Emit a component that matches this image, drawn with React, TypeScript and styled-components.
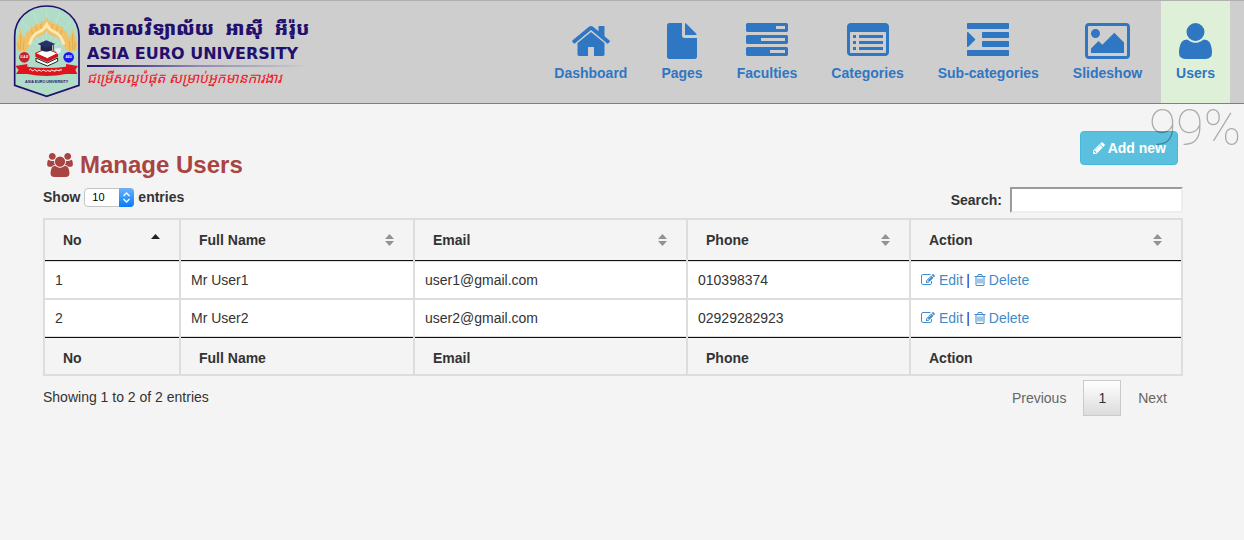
import React from "react";
import styled, { createGlobalStyle } from "styled-components";

const GlobalStyle = createGlobalStyle`
  *, *::before, *::after { box-sizing: border-box; }
  body {
    margin: 0;
    background: #f4f4f4;
    color: #333;
    font: 14px/20px "Liberation Sans", Arial, sans-serif;
  }
  a { color: #428bca; text-decoration: none; }
  button, input, select { font: inherit; color: inherit; }
`;

/* ---------- icons ---------- */

type IconShape = { width: number; d: string };

const row = (y: number, x = 0) =>
  `M1792 ${y + 32}v192q0 13-9.5 22.5t-22.5 9.5h-${1728 - x}q-13 0-22.5-9.5t-9.5-22.5v-192q0-13 9.5-22.5t22.5-9.5h${1728 - x}q13 0 22.5 9.5t9.5 22.5z`;
const dot = (y: number) => `M256 ${y}h128v128h-128zM512 ${y}h1024v128h-1024z`;
const bar = (y: number) =>
  `M1792 ${y + 64}v256q0 26-19 45t-45 19h-1664q-26 0-45-19t-19-45v-256q0-26 19-45t45-19h1664q26 0 45 19t19 45z`;
const slot = (x: number) =>
  `M${x} 736v576q0 14-9 23t-23 9h-64q-14 0-23-9t-9-23v-576q0-14 9-23t23-9h64q14 0 23 9t9 23z`;

const icons: Record<string, IconShape> = {
  home: {
    width: 1792,
    d: "M1472 992v480q0 26-19 45t-45 19h-384v-384h-256v384h-384q-26 0-45-19t-19-45v-480q0-1 .5-3t.5-3l575-474 575 474q1 2 1 6zm223-69l-62 74q-8 9-21 11h-3q-13 0-21-7l-692-577-692 577q-12 8-24 7-13-2-21-11l-62-74q-8-10-7-23.5t11-21.5l719-599q32-26 76-26t76 26l244 204v-195q0-14 9-23t23-9h192q14 0 23 9t9 23v408l219 182q10 8 11 21.5t-7 23.5z",
  },
  file: {
    width: 1280,
    d: "M96 128H640V672q0 40 28 68t68 28H1280V1568q0 40-28 68t-68 28H96q-40 0-68-28t-28-68V224q0-40 28-68t68-28zM768 128q40 14 66 40l388 388q34 34 44 84H768z",
  },
  tasks: {
    width: 1792,
    d: `${bar(128)}M1280 256v128h384v-128z${bar(640)}M640 768v128h1024v-128z${bar(1152)}M1024 1280v128h640v-128z`,
  },
  list: {
    width: 1792,
    d: `M160 128h1472q66 0 113 47t47 113v1088q0 66-47 113t-113 47H160q-66 0-113-47t-47-113V288q0-66 47-113t113-47zM160 512q-32 0-32 32v832q0 32 32 32h1472q32 0 32-32V544q0-32-32-32z${dot(640)}${dot(896)}${dot(1152)}`,
  },
  indent: {
    width: 1792,
    d: `M352 832q0 14-9 23l-288 288q-9 9-23 9-13 0-22.5-9.5t-9.5-22.5v-576q0-13 9.5-22.5t22.5-9.5q14 0 23 9l288 288q9 9 9 23z${row(128)}${row(512, 640)}${row(896, 640)}${row(1280)}`,
  },
  picture: {
    width: 1920,
    d: "M640 576q0 80-56 136t-136 56-136-56-56-136 56-136 136-56 136 56 56 136zm1024 384v448h-1408v-192l320-320 160 160 512-512zm96-704h-1600q-13 0-22.5 9.5t-9.5 22.5v1216q0 13 9.5 22.5t22.5 9.5h1600q13 0 22.5-9.5t9.5-22.5v-1216q0-13-9.5-22.5t-22.5-9.5zm160 32v1216q0 66-47 113t-113 47h-1600q-66 0-113-47t-47-113v-1216q0-66 47-113t113-47h1600q66 0 113 47t47 113z",
  },
  user: {
    width: 1408,
    d: "M1408 1405q0 120-73 189.5t-194 69.5h-874q-121 0-194-69.5t-73-189.5q0-53 3.5-103.5t14-109 26.5-108.5 43-97.5 62-81 85.5-53.5 111.5-20q9 0 42 21.5t74.5 48 108 48 133.5 21.5 133.5-21.5 108-48 74.5-48 42-21.5q61 0 111.5 20t85.5 53.5 62 81 43 97.5 26.5 108.5 14 109 3.5 103.5zM1088 512q0 159-112.5 271.5t-271.5 112.5-271.5-112.5-112.5-271.5 112.5-271.5 271.5-112.5 271.5 112.5 112.5 271.5z",
  },
  users: {
    width: 1920,
    d: "M593 896q-162 5-265 128h-134q-82 0-138-40.5t-56-118.5q0-353 124-353 6 0 43.5 21t97.5 42.5 119 21.5q67 0 133-23-5 37-5 66 0 139 81 256zm1071 637q0 120-73 189.5t-194 69.5h-874q-121 0-194-69.5t-73-189.5q0-53 3.5-103.5t14-109 26.5-108.5 43-97.5 62-81 85.5-53.5 111.5-20q10 0 43 21.5t73 48 107 48 135 21.5 135-21.5 107-48 73-48 43-21.5q61 0 111.5 20t85.5 53.5 62 81 43 97.5 26.5 108.5 14 109 3.5 103.5zm-1024-1277q0 106-75 181t-181 75-181-75-75-181 75-181 181-75 181 75 75 181zm704 384q0 159-112.5 271.5t-271.5 112.5-271.5-112.5-112.5-271.5 112.5-271.5 271.5-112.5 271.5 112.5 112.5 271.5zm576 225q0 78-56 118.5t-138 40.5h-134q-103-123-265-128 81-117 81-256 0-29-5-66 66 23 133 23 59 0 119-21.5t97.5-42.5 43.5-21q124 0 124 353zm-128-609q0 106-75 181t-181 75-181-75-75-181 75-181 181-75 181 75 75 181z",
  },
  pencil: {
    width: 1792,
    d: "M491 1536l91-91-235-235-91 91v107h128v128h107zm523-928q0-22-22-22-10 0-17 7l-542 542q-7 7-7 17 0 22 22 22 10 0 17-7l542-542q7-7 7-17zm-54-192l416 416-832 832h-416v-416zm683 96q0 53-37 90l-166 166-416-416 166-165q36-38 90-38 53 0 91 38l235 234q37 39 37 91z",
  },
  edit: {
    width: 1792,
    d: "M888 1184l116-116-152-152-116 116v56h96v96h56zm440-720q-16-16-33 1l-350 350q-17 17-1 33t33-1l350-350q17-17 1-33zm80 594v190q0 119-84.5 203.5t-203.5 84.5h-832q-119 0-203.5-84.5t-84.5-203.5v-832q0-119 84.5-203.5t203.5-84.5h832q63 0 117 25 15 7 18 23 3 17-9 29l-49 49q-14 14-32 8-23-6-45-6h-832q-66 0-113 47t-47 113v832q0 66 47 113t113 47h832q66 0 113-47t47-113v-126q0-13 9-22l64-64q15-15 35-7t20 29zm-96-738l288 288-672 672h-288v-288zm444 132l-92 92-288-288 92-92q28-28 68-28t68 28l152 152q28 28 28 68t-28 68z",
  },
  trash: {
    width: 1792,
    d: `${slot(704)}${slot(960)}${slot(1216)}M1344 1460v-948h-896v948q0 22 7 40.5t14.5 27 10.5 8.5h832q3 0 10.5-8.5t14.5-27 7-40.5zm-672-1076h448l-48-117q-7-9-17-11h-317q-10 2-17 11zm928 32v64q0 14-9 23t-23 9h-96v948q0 83-47 143.5t-113 60.5h-832q-66 0-113-58.5t-47-141.5v-952h-96q-14 0-23-9t-9-23v-64q0-14 9-23t23-9h309l70-167q15-37 54-63t79-26h320q40 0 79 26t54 63l70 167h309q14 0 23 9t9 23z`,
  },
};

const Icon = ({ name, size }: { name: string; size: number }) => {
  const { width, d } = icons[name];
  return (
    <svg
      width={Math.round((size * width) / 1792)}
      height={size}
      viewBox={`0 0 ${width} 1792`}
      fill="currentColor"
      fillRule="evenodd"
      aria-hidden="true"
    >
      <path d={d} />
    </svg>
  );
};

/* ---------- header ---------- */

const Header = styled.header`
  display: flex;
  justify-content: space-between;
  padding: 0 14px 0 13px;
  background: #cecece;
  border-top: 1px solid #b0b0b0;
  border-bottom: 1px solid #2a9fc4;
`;

const Brand = styled.a`
  display: flex;
  gap: 6px;
  padding-top: 3px;
`;

const BrandText = styled.span`
  display: flex;
  flex-direction: column;
  padding-top: 10px;
  white-space: nowrap;
  color: #23106e;
`;

const KhmerName = styled.span`
  display: flex;
  gap: 11px;
  font: 900 19px/28px "Noto Sans Khmer", "Khmer OS Muol", "Noto Sans", sans-serif;
`;

const LatinName = styled.span`
  font: bold 16px/23px "DejaVu Sans", sans-serif;
`;

const BrandRule = styled.span`
  height: 2px;
  background: linear-gradient(to right, #23106e, #8f89b4 50%, #cecece);
`;

const Motto = styled.span`
  padding-top: 1px;
  color: #f01424;
  font: italic 14px/20px "Noto Sans Khmer", "Khmer OS", "Noto Sans", sans-serif;
`;

const Nav = styled.nav`
  display: flex;
  gap: 4px;
`;

const NavItem = styled.a<{ $active?: boolean }>`
  display: flex;
  flex-direction: column;
  align-items: center;
  gap: 1px;
  padding: 19px 15px 20px;
  color: #2f76c3;
  font-weight: bold;
  background: ${(p) => (p.$active ? "#dff0d8" : "transparent")};
`;

const Emblem = () => (
  <svg width="68" height="94" viewBox="39 12 204 282" aria-hidden="true">
    <path
      d="M44 256V108C44 56 86 18 140 18S237 56 237 108V256L140 289Z"
      fill="#b0dcc8"
      stroke="#23106e"
      strokeWidth="5"
    />
    <path
      d="M140 150V30M140 150L100 36M140 150L180 36M140 150L66 62M140 150L214 62M140 150L50 100M140 150L230 100"
      stroke="#c6e8d8"
      strokeWidth="2"
    />
    <path
      d="M140 52L146 64L156 62L160 72L172 70L177 80L188 80L191 92L200 94L204 112L214 106L218 84L226 110L231 132L228 152L208 156L196 148C190 126 176 112 160 108C150 105 144 99 140 92C136 99 130 105 120 108C104 112 90 126 84 148L72 156L52 152L49 132L54 110L62 84L66 106L76 112L80 94L89 92L92 80L103 80L108 70L120 72L124 62L134 64Z"
      fill="#f0c167"
    />
    <path
      d="M88 134C94 114 106 98 120 94C130 90 136 82 140 74C144 82 150 90 160 94C174 98 186 114 192 134"
      stroke="#fbe9b4"
      strokeWidth="9"
      fill="none"
    />
    <path
      d="M58 148L54 128M62 150L62 104M70 150L72 122M210 150L208 122M218 150L218 104M223 148L226 128M98 104L94 88M110 94L108 78M124 86L122 72M156 86L158 72M170 94L172 78M182 104L186 88"
      stroke="#dca244"
      strokeWidth="2"
      fill="none"
    />
    <path d="M106 160L138 146L174 160L142 176Z" fill="#fff" stroke="#d5141c" strokeWidth="3" />
    <path d="M106 160L142 176L174 160V170L142 186L106 170Z" fill="#d5141c" />
    <path d="M108 174L142 189L173 174V184L142 198L108 184Z" fill="#fff" stroke="#222" strokeWidth="3" />
    <path d="M164 146L182 144L182 156L172 162Z" fill="#e9f3f7" />
    <path d="M122 134H156V150Q139 160 122 150Z" fill="#1d2554" />
    <path d="M113 132L139 121L166 132L139 143Z" fill="#27316b" />
    <path d="M160 134V152" stroke="#c5161d" strokeWidth="3" />
    <circle cx="73" cy="172" r="16" fill="#c3202c" />
    <circle cx="206" cy="172" r="16" fill="#1a1af0" />
    <g fill="#fff" fontFamily="Liberation Sans, sans-serif" fontWeight="bold" fontSize="9" textAnchor="middle">
      <text x="73" y="175">U.A.E</text>
      <text x="206" y="175">AEU</text>
    </g>
    <path
      d="M46 198L82 192V200Q140 208 198 200V192L234 198L226 210L232 222L198 222Q140 234 82 222L48 222L56 210Z"
      fill="#e0141c"
    />
    <path
      d="M88 210q4-6 7 0t6 1t7 0t6 1t7 0t6 0t7 0t6 1t7 0t6-1t7 0t6 0t7-1t6 0t7-1"
      stroke="#fff"
      strokeWidth="3"
      fill="none"
    />
    <text
      x="140"
      y="248"
      fill="#23106e"
      fontFamily="Liberation Sans, sans-serif"
      fontWeight="bold"
      fontSize="11"
      textAnchor="middle"
    >
      ASIA EURO UNIVERSITY
    </text>
  </svg>
);

/* ---------- page ---------- */

const Progress = styled.div`
  position: absolute;
  top: 98px;
  right: 3px;
  color: rgba(0, 0, 0, 0.3);
  font: 100 50px/60px Roboto, sans-serif;
  pointer-events: none;
`;

const Main = styled.main`
  padding: 27px 61px 40px 43px;
`;

const TitleRow = styled.div`
  display: flex;
  justify-content: space-between;
  align-items: flex-start;
  padding-right: 5px;
`;

const Title = styled.h1`
  display: flex;
  align-items: center;
  gap: 7px;
  margin: 20px 0 0 4px;
  color: #a94442;
  font-size: 24px;
  line-height: 28px;
`;

const AddButton = styled.button`
  display: flex;
  align-items: center;
  gap: 2px;
  height: 34px;
  padding: 0 11px;
  border: 1px solid #46b8da;
  border-radius: 4px;
  background: #5bc0de;
  color: #fff;
  font-weight: bold;
`;

const Controls = styled.div`
  display: flex;
  justify-content: space-between;
  align-items: flex-start;
  margin: 8px 0 5px;
  font-weight: bold;
`;

const LengthLabel = styled.label`
  display: flex;
  gap: 4px;
`;

const SelectBox = styled.span`
  position: relative;
  display: flex;
  height: 19px;
  margin-top: 1px;
`;

const LengthSelect = styled.select`
  appearance: none;
  width: 50px;
  padding: 0 7px;
  border: 1px solid #c4c4c4;
  border-radius: 4px;
  background: #fff;
  color: #000;
  font-size: 11px;
  font-weight: normal;
  line-height: 17px;
`;

const Stepper = styled.svg`
  position: absolute;
  right: 0;
  top: 0;
  pointer-events: none;
`;

const SearchLabel = styled.label`
  display: flex;
  align-items: center;
  gap: 8px;
`;

const SearchInput = styled.input`
  width: 173px;
  height: 26px;
  padding: 1px 4px;
  border: 2px solid;
  border-color: #9a9a9a #eee #eee #9a9a9a;
  background: #fff;
  font-weight: normal;
`;

const Table = styled.table`
  width: 100%;
  table-layout: fixed;
  border-collapse: separate;
  border-spacing: 0;
  border: solid #ddd;
  border-width: 2px 0 0 2px;
`;

const Column = styled.col<{ $width: number }>`
  width: ${(p) => p.$width}px;
`;

const HeadCell = styled.th`
  height: 42px;
  padding: 0 19px 2px 18px;
  border: solid #ddd;
  border-width: 0 2px 1px 0;
  box-shadow: inset 0 -1px 0 #111;
  text-align: left;
`;

const SortButton = styled.button`
  display: flex;
  align-items: center;
  justify-content: space-between;
  width: 100%;
  padding: 0;
  border: 0;
  background: none;
  font-weight: bold;
`;

const Cell = styled.td<{ $last: boolean }>`
  height: ${(p) => (p.$last ? 37 : 38)}px;
  padding: 0 10px;
  border: solid #ddd;
  border-width: 0 2px ${(p) => (p.$last ? 1 : 2)}px 0;
  background: #fff;
`;

const FootCell = styled.th`
  height: 39px;
  padding: 4px 18px 0;
  border: solid #ddd;
  border-width: 0 2px 2px 0;
  box-shadow: inset 0 1px 0 #111;
  text-align: left;
`;

const Actions = styled.div`
  display: flex;
  align-items: center;
  gap: 3px;
  color: #1c1c9c;
`;

const ActionLink = styled.a`
  display: flex;
  align-items: center;
  gap: 4px;
`;

const TrashLink = styled(ActionLink)`
  gap: 2px;
`;

const TableFooter = styled.div`
  display: flex;
  justify-content: space-between;
  align-items: flex-start;
  padding-top: 4px;
`;

const Info = styled.div`
  padding-top: 7px;
`;

const Pager = styled.div`
  display: flex;
  gap: 2px;
  padding-right: 1px;
`;

const PageButton = styled.button<{ $current?: boolean }>`
  height: 36px;
  padding: 0 14px;
  border: 1px solid ${(p) => (p.$current ? "#cacaca" : "transparent")};
  background: ${(p) => (p.$current ? "linear-gradient(#fff, #dcdcdc)" : "none")};
  color: ${(p) => (p.$current ? "#333" : "#666")};
`;

const navItems = [
  { icon: "home", label: "Dashboard" },
  { icon: "file", label: "Pages" },
  { icon: "tasks", label: "Faculties" },
  { icon: "list", label: "Categories" },
  { icon: "indent", label: "Sub-categories" },
  { icon: "picture", label: "Slideshow" },
  { icon: "user", label: "Users", active: true },
];

const columns = [
  { name: "No", width: 136 },
  { name: "Full Name", width: 234 },
  { name: "Email", width: 273 },
  { name: "Phone", width: 223 },
  { name: "Action", width: 272 },
];

const users = [
  { name: "Mr User1", email: "user1@gmail.com", phone: "010398374" },
  { name: "Mr User2", email: "user2@gmail.com", phone: "02929282923" },
];

const SortMark = ({ ascending }: { ascending: boolean }) => (
  <svg width="9" height="12" viewBox="0 0 9 12" aria-hidden="true">
    <path d="M0 5L4.5 0L9 5Z" fill={ascending ? "#222" : "#929292"} />
    {!ascending && <path d="M0 7H9L4.5 12Z" fill="#929292" />}
  </svg>
);

export default function App() {
  return (
    <>
      <GlobalStyle />
      <Header>
        <Brand href="#" aria-label="Asia Euro University">
          <Emblem />
          <BrandText>
            <KhmerName lang="km">
              <span>សាកលវិទ្យាល័យ</span>
              <span>អាស៊ី</span>
              <span>អឺរ៉ុប</span>
            </KhmerName>
            <LatinName>ASIA EURO UNIVERSITY</LatinName>
            <BrandRule />
            <Motto lang="km">ជម្រើសល្អបំផុត សម្រាប់អ្នកមានការងារ</Motto>
          </BrandText>
        </Brand>
        <Nav>
          {navItems.map((item) => (
            <NavItem key={item.label} href="#" $active={item.active}>
              <Icon name={item.icon} size={42} />
              {item.label}
            </NavItem>
          ))}
        </Nav>
      </Header>
      <Main>
        <TitleRow>
          <Title>
            <Icon name="users" size={24} />
            Manage Users
          </Title>
          <AddButton type="button">
            <Icon name="pencil" size={14} />
            Add new
          </AddButton>
        </TitleRow>
        <Controls>
          <LengthLabel>
            Show
            <SelectBox>
              <LengthSelect defaultValue="10">
                <option>10</option>
                <option>25</option>
                <option>50</option>
              </LengthSelect>
              <Stepper width="15" height="19" viewBox="0 0 15 19">
                <defs>
                  <linearGradient id="stepper" x1="0" y1="0" x2="0" y2="1">
                    <stop offset="0" stopColor="#6bb3fa" />
                    <stop offset="1" stopColor="#087bfe" />
                  </linearGradient>
                </defs>
                <path d="M0 0H11Q15 0 15 4V15Q15 19 11 19H0Z" fill="url(#stepper)" />
                <path d="M4.500 8L7.500 5L10.500 8M4.500 11L7.500 14L10.500 11" fill="none" stroke="#fff" strokeWidth="1.300" />
              </Stepper>
            </SelectBox>
            entries
          </LengthLabel>
          <SearchLabel>
            Search:
            <SearchInput type="search" />
          </SearchLabel>
        </Controls>
        <Table>
          <colgroup>
            {columns.map((c) => (
              <Column key={c.name} $width={c.width} />
            ))}
          </colgroup>
          <thead>
            <tr>
              {columns.map((c, i) => (
                <HeadCell key={c.name} scope="col">
                  <SortButton type="button">
                    {c.name}
                    <SortMark ascending={i === 0} />
                  </SortButton>
                </HeadCell>
              ))}
            </tr>
          </thead>
          <tbody>
            {users.map((u, i) => {
              const last = i === users.length - 1;
              return (
                <tr key={u.email}>
                  <Cell $last={last}>{i + 1}</Cell>
                  <Cell $last={last}>{u.name}</Cell>
                  <Cell $last={last}>{u.email}</Cell>
                  <Cell $last={last}>{u.phone}</Cell>
                  <Cell $last={last}>
                    <Actions>
                      <ActionLink href="#">
                        <Icon name="edit" size={14} />
                        Edit
                      </ActionLink>
                      |
                      <TrashLink href="#">
                        <Icon name="trash" size={14} />
                        Delete
                      </TrashLink>
                    </Actions>
                  </Cell>
                </tr>
              );
            })}
          </tbody>
          <tfoot>
            <tr>
              {columns.map((c) => (
                <FootCell key={c.name}>{c.name}</FootCell>
              ))}
            </tr>
          </tfoot>
        </Table>
        <TableFooter>
          <Info>Showing 1 to 2 of 2 entries</Info>
          <Pager>
            <PageButton type="button">Previous</PageButton>
            <PageButton type="button" $current>
              1
            </PageButton>
            <PageButton type="button">Next</PageButton>
          </Pager>
        </TableFooter>
      </Main>
      <Progress>99%</Progress>
    </>
  );
}
